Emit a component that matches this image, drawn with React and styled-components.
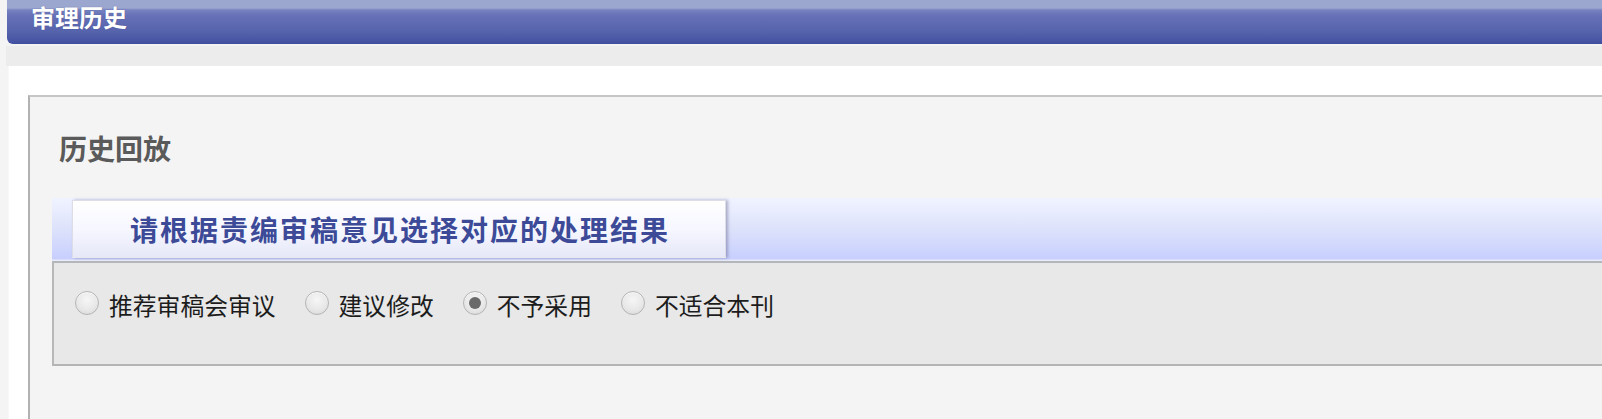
import React, { useState } from "react";
import styled, { createGlobalStyle } from "styled-components";

const Global = createGlobalStyle`
  html, body { margin: 0; padding: 0; background: #f4f4f4; overflow: hidden; }
  body { font-family: "Noto Sans CJK SC", "Noto Sans", sans-serif; }
  * { box-sizing: border-box; }
`;

const Page = styled.div`
  width: 1602px;
  height: 419px;
  padding-left: 6px;
  background: #f4f4f4;
`;

const TitleBar = styled.div`
  height: 44px;
  margin-left: 1px;
  border-radius: 0 0 0 6px;
  background: linear-gradient(
    to bottom,
    #9ca7d0 0px,
    #9ca7d0 8px,
    #7682c0 10px,
    #6670b6 16px,
    #5563ac 32px,
    #4452a2 42px,
    #3e4c9c 44px
  );
  display: flex;
  align-items: flex-start;
  padding: 1px 0 0 24px;
`;

const TitleText = styled.h1`
  margin: 0;
  font-size: 24px;
  line-height: 32px;
  font-weight: 700;
  color: #ffffff;
  text-shadow: 0 0 1px rgba(40, 50, 110, 0.6);
`;

const Band = styled.div`
  height: 22px;
  background: #ececec;
  border-top: 2px solid #f2f2f2;
`;

const WhitePanel = styled.div`
  background: #ffffff;
  margin-left: 2px;
  border-left: 1px solid #f8f8f8;
  padding: 29px 0 0 19px;
  height: 353px;
`;

const HistoryBox = styled.section`
  background: #f4f4f4;
  border-top: 2px solid #c6c6c6;
  border-left: 2px solid #b2b2b2;
  height: 330px;
  padding: 34px 0 0 0;
`;

const Heading = styled.h2`
  margin: 0 0 33px 29px;
  font-size: 28px;
  line-height: 34px;
  font-weight: 700;
  color: #5a5a5a;
`;

const Banner = styled.div`
  margin-left: 22px;
  height: 63px;
  padding: 2px 0 3px 20px;
  background: linear-gradient(to bottom, #f0f3ff 0%, #dde2fb 50%, #c8cffe 96%, #f2f2f8 100%);
`;

const Tab = styled.div`
  width: 654px;
  height: 58px;
  display: flex;
  align-items: center;
  justify-content: center;
  background: linear-gradient(to bottom, #ffffff 0%, #f6f7ff 50%, #e6e8f8 100%);
  border: 1px solid #dcdde6;
  border-bottom-color: #e8e8f0;
  box-shadow: 2px 0 3px rgba(90, 90, 130, 0.45);
`;

const TabText = styled.span`
  font-size: 28px;
  font-weight: 700;
  letter-spacing: 2px;
  color: #3c4a98;
  margin-left: 2px;
`;

const OptionBox = styled.div`
  margin-left: 22px;
  height: 105px;
  background: #e8e8e8;
  border-top: 2px solid #b3b6ba;
  border-bottom: 2px solid #b4b4b4;
  border-left: 2px solid #b8b8b8;
  display: flex;
  align-items: flex-start;
  padding: 27px 0 0 21px;
`;

const Option = styled.label`
  display: flex;
  align-items: center;
  margin-right: 29px;
  cursor: pointer;
`;

const Radio = styled.span`
  width: 24px;
  height: 24px;
  border-radius: 50%;
  border: 1px solid #b4b4b4;
  background: radial-gradient(circle at 50% 35%, #f6f6f6 0%, #e8e8e8 55%, #d6d6d6 100%);
  box-shadow: inset 0 1px 1px rgba(255, 255, 255, 0.8);
  display: flex;
  align-items: center;
  justify-content: center;
  margin-right: 10px;
  margin-top: -5px;
  flex-shrink: 0;
  &::after {
    content: "";
    width: 12px;
    height: 12px;
    border-radius: 50%;
    background: ${(p) => (p.$checked ? "#6a6a6a" : "transparent")};
  }
`;

const OptionText = styled.span`
  font-size: 23.8px;
  line-height: 30px;
  color: #1c1c1c;
`;

const options = ["推荐审稿会审议", "建议修改", "不予采用", "不适合本刊"];

export default function App() {
  const [value, setValue] = useState("不予采用");
  return (
    <Page>
      <Global />
      <TitleBar>
        <TitleText>审理历史</TitleText>
      </TitleBar>
      <Band />
      <WhitePanel>
        <HistoryBox>
          <Heading>历史回放</Heading>
          <Banner>
            <Tab>
              <TabText>请根据责编审稿意见选择对应的处理结果</TabText>
            </Tab>
          </Banner>
          <OptionBox>
            {options.map((o) => (
              <Option key={o} onClick={() => setValue(o)}>
                <Radio $checked={value === o} />
                <OptionText>{o}</OptionText>
              </Option>
            ))}
          </OptionBox>
        </HistoryBox>
      </WhitePanel>
    </Page>
  );
}
